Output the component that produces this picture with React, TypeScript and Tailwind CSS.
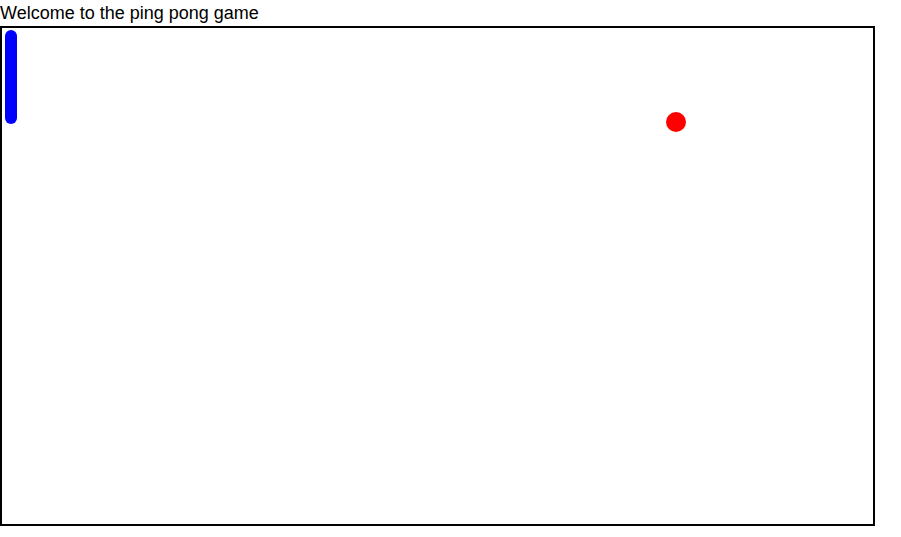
export default function App() {
  return (
    <div className="bg-white min-h-screen" style={{ fontFamily: '"Liberation Sans", Arial, sans-serif' }}>
      <div className="text-[18px] leading-[26px] text-black">Welcome to the ping pong game</div>
      <div className="relative w-[875px] h-[500px] border-2 border-black">
        <div className="absolute left-[3px] top-[2px] w-[12px] h-[94px] rounded-full bg-[#0000ff]" />
        <div className="absolute left-[664px] top-[84px] w-[20px] h-[20px] rounded-full bg-[#ff0000]" />
      </div>
    </div>
  );
}
